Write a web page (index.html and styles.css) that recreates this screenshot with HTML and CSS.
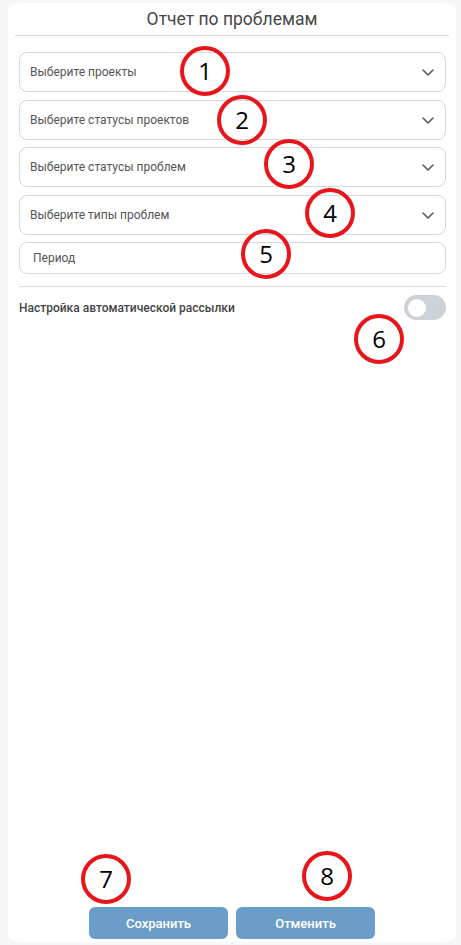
FILE: index.html
```html
<!DOCTYPE html>
<html lang="ru">
<head>
<meta charset="utf-8">
<link rel="stylesheet" href="styles.css">
</head>
<body>
<div class="card">
  <div class="header">Отчет по проблемам</div>
  <div class="body">
    <div class="select"><span>Выберите проекты</span><svg class="chev" width="12" height="7" viewBox="0 0 12 7"><path d="M1 1l5 5 5-5" fill="none" stroke="#555" stroke-width="1.5" stroke-linecap="round" stroke-linejoin="round"/></svg></div>
    <div class="select"><span>Выберите статусы проектов</span><svg class="chev" width="12" height="7" viewBox="0 0 12 7"><path d="M1 1l5 5 5-5" fill="none" stroke="#555" stroke-width="1.5" stroke-linecap="round" stroke-linejoin="round"/></svg></div>
    <div class="select"><span>Выберите статусы проблем</span><svg class="chev" width="12" height="7" viewBox="0 0 12 7"><path d="M1 1l5 5 5-5" fill="none" stroke="#555" stroke-width="1.5" stroke-linecap="round" stroke-linejoin="round"/></svg></div>
    <div class="select"><span>Выберите типы проблем</span><svg class="chev" width="12" height="7" viewBox="0 0 12 7"><path d="M1 1l5 5 5-5" fill="none" stroke="#555" stroke-width="1.5" stroke-linecap="round" stroke-linejoin="round"/></svg></div>
    <div class="input">Период</div>
    <div class="divider"></div>
    <div class="row">
      <span class="label">Настройка автоматической рассылки</span>
      <span class="toggle"><span class="knob"></span></span>
    </div>
  </div>
  <div class="footer">
    <button class="btn">Сохранить</button>
    <button class="btn">Отменить</button>
  </div>
</div>
<div class="mark m1">1</div>
<div class="mark m2">2</div>
<div class="mark m3">3</div>
<div class="mark m4">4</div>
<div class="mark m5">5</div>
<div class="mark m6">6</div>
<div class="mark m7">7</div>
<div class="mark m8">8</div>
</body>
</html>
```
FILE: styles.css
```css
html, body {
  margin: 0;
  padding: 0;
  background: #f6f7f9;
  font-family: Roboto, "Liberation Sans", sans-serif;
}
body {
  position: relative;
  height: 945px;
  overflow: hidden;
}
.card {
  margin: 3px 5px 0 8px;
  height: 939px;
  background: #fff;
  border-radius: 10px;
  display: flex;
  flex-direction: column;
  box-sizing: border-box;
}
.header {
  margin: 0 7px;
  height: 32px;
  border-bottom: 1px solid #dcdde1;
  text-align: center;
  font-size: 17.5px;
  line-height: 32px;
  color: #474747;
}
.body {
  padding: 16px 10px 0 11px;
  display: flex;
  flex-direction: column;
}
.select {
  height: 40px;
  box-sizing: border-box;
  border: 1px solid #d6d8de;
  border-radius: 8px;
  display: flex;
  align-items: center;
  justify-content: space-between;
  padding: 0 11px 0 10px;
  font-size: 12px;
  color: #555;
  margin-bottom: 8px;
}
.select:nth-child(2n) {
  margin-bottom: 7px;
}
.chev {
  display: block;
}
.input {
  height: 32px;
  box-sizing: border-box;
  border: 1px solid #d6d8de;
  border-radius: 8px;
  display: flex;
  align-items: center;
  padding: 0 13px;
  font-size: 12px;
  color: #555;
}
.divider {
  margin-top: 12px;
  border-top: 1px solid #dcdde1;
}
.row {
  margin-top: 8px;
  display: flex;
  align-items: center;
  justify-content: space-between;
  height: 25px;
}
.label {
  font-size: 12px;
  font-weight: 500;
  color: #454545;
}
.toggle {
  width: 42px;
  height: 25px;
  border-radius: 13px;
  background: #cdd1d8;
  position: relative;
}
.knob {
  position: absolute;
  left: 4px;
  top: 3.5px;
  width: 18px;
  height: 18px;
  border-radius: 50%;
  background: #fff;
}
.footer {
  margin-top: auto;
  display: flex;
  justify-content: center;
  gap: 8px;
  padding-bottom: 3px;
}
.btn {
  width: 139px;
  height: 32px;
  border: none;
  border-radius: 6px;
  background: #6a9ec9;
  color: #fff;
  font-family: Roboto, "Liberation Sans", sans-serif;
  font-size: 13px;
  font-weight: 500;
  padding: 0;
}
.mark {
  position: absolute;
  width: 42px;
  height: 42px;
  border: 4px solid #e8151b;
  border-radius: 50%;
  display: flex;
  align-items: center;
  justify-content: center;
  font-family: "Open Sans", "Liberation Sans", sans-serif;
  font-size: 24px;
  color: #000;
  line-height: 1;
}
.m1 { left: 180px; top: 46px; }
.m2 { left: 217px; top: 95px; }
.m3 { left: 264px; top: 139px; }
.m4 { left: 305px; top: 188px; }
.m5 { left: 241px; top: 229px; }
.m6 { left: 354px; top: 314px; }
.m7 { left: 81px; top: 854px; }
.m8 { left: 302px; top: 851px; }
```
